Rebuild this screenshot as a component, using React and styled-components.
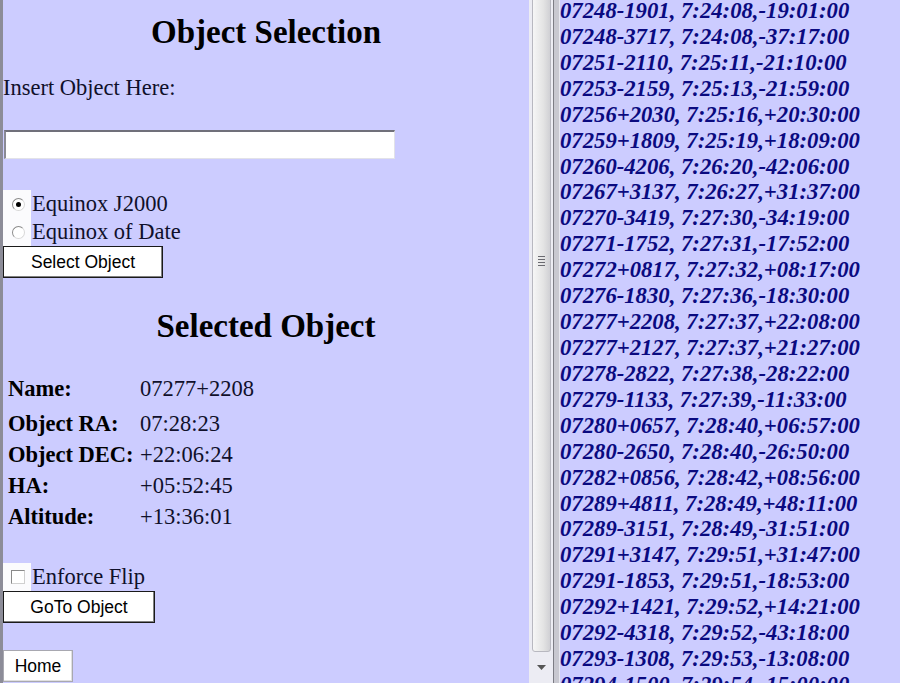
import React from 'react';
import styled, { createGlobalStyle } from 'styled-components';

const objects = [
  '07248-1901, 7:24:08,-19:01:00',
  '07248-3717, 7:24:08,-37:17:00',
  '07251-2110, 7:25:11,-21:10:00',
  '07253-2159, 7:25:13,-21:59:00',
  '07256+2030, 7:25:16,+20:30:00',
  '07259+1809, 7:25:19,+18:09:00',
  '07260-4206, 7:26:20,-42:06:00',
  '07267+3137, 7:26:27,+31:37:00',
  '07270-3419, 7:27:30,-34:19:00',
  '07271-1752, 7:27:31,-17:52:00',
  '07272+0817, 7:27:32,+08:17:00',
  '07276-1830, 7:27:36,-18:30:00',
  '07277+2208, 7:27:37,+22:08:00',
  '07277+2127, 7:27:37,+21:27:00',
  '07278-2822, 7:27:38,-28:22:00',
  '07279-1133, 7:27:39,-11:33:00',
  '07280+0657, 7:28:40,+06:57:00',
  '07280-2650, 7:28:40,-26:50:00',
  '07282+0856, 7:28:42,+08:56:00',
  '07289+4811, 7:28:49,+48:11:00',
  '07289-3151, 7:28:49,-31:51:00',
  '07291+3147, 7:29:51,+31:47:00',
  '07291-1853, 7:29:51,-18:53:00',
  '07292+1421, 7:29:52,+14:21:00',
  '07292-4318, 7:29:52,-43:18:00',
  '07293-1308, 7:29:53,-13:08:00',
  '07294-1500, 7:29:54,-15:00:00',
];

const details = [
  { label: 'Name:', value: '07277+2208', height: 39 },
  { label: 'Object RA:', value: '07:28:23', height: 31 },
  { label: 'Object DEC:', value: '+22:06:24', height: 31 },
  { label: 'HA:', value: '+05:52:45', height: 31 },
  { label: 'Altitude:', value: '+13:36:01', height: 31 },
];

const App = () => {
  return (
    <>
      <GlobalStyle />
      <Window>
        <LeftFrame>
          <Heading top={13}>Object Selection</Heading>
          <Label top={24}>Insert Object Here:</Label>
          <TextInput type="text" />
          <OptionGroup>
            <OptionRow>
              <MarkCell>
                <Radio checked />
              </MarkCell>
              Equinox J2000
            </OptionRow>
            <OptionRow>
              <MarkCell>
                <Radio />
              </MarkCell>
              Equinox of Date
            </OptionRow>
          </OptionGroup>
          <Button width={160}>Select Object</Button>

          <Heading top={29}>Selected Object</Heading>
          <DetailTable>
            {details.map((d) => (
              <DetailRow key={d.label} h={d.height}>
                <DetailLabel>{d.label}</DetailLabel>
                <DetailValue>{d.value}</DetailValue>
              </DetailRow>
            ))}
          </DetailTable>

          <CheckRow>
            <MarkCell>
              <Checkbox />
            </MarkCell>
            Enforce Flip
          </CheckRow>
          <Button width={152}>GoTo Object</Button>
          <Button width={70} plain top={27}>Home</Button>
        </LeftFrame>

        <Scrollbar>
          <Thumb>
            <Grip>
              <span />
              <span />
              <span />
              <span />
            </Grip>
          </Thumb>
          <ArrowButton>
            <svg width="9" height="5" viewBox="0 0 9 5">
              <path d="M0 0 H9 L4.5 5 Z" fill="#555" />
            </svg>
          </ArrowButton>
        </Scrollbar>
        <Divider />

        <RightFrame>
          {objects.map((o) => (
            <ObjectLine key={o}>{o}</ObjectLine>
          ))}
        </RightFrame>
      </Window>
    </>
  );
};

const GlobalStyle = createGlobalStyle`
  html, body {
    margin: 0;
    padding: 0;
    background: #ccccff;
  }
`;

const Window = styled.div`
  display: flex;
  width: 900px;
  height: 683px;
  overflow: hidden;
  background: #ccccff;
  font-family: "Liberation Serif", "Times New Roman", serif;
  color: #10102a;
`;

const LeftFrame = styled.div`
  width: 526px;
  flex-shrink: 0;
  border-left: 3px solid #8c8c98;
  display: flex;
  flex-direction: column;
  align-items: flex-start;
`;

const Heading = styled.h2`
  align-self: stretch;
  margin: ${(p) => p.top}px 0 0 0;
  font-size: 33px;
  line-height: 38px;
  font-weight: bold;
  text-align: center;
  color: #000;
`;

const Label = styled.div`
  margin-top: ${(p) => p.top}px;
  font-size: 22.5px;
  line-height: 26px;
`;

const TextInput = styled.input`
  margin: 29px 0 0 1px;
  width: 391px;
  height: 29px;
  box-sizing: border-box;
  background: #fff;
  border: 1px solid #e2e2e8;
  border-top: 2px solid #70707a;
  border-left: 2px solid #8a8a94;
  outline: none;
`;

const OptionGroup = styled.div`
  margin-top: 31px;
  display: flex;
  flex-direction: column;
`;

const OptionRow = styled.div`
  display: flex;
  align-items: center;
  height: 28px;
  font-size: 22.5px;
`;

const CheckRow = styled(OptionRow)`
  margin-top: 31px;
`;

const MarkCell = styled.div`
  width: 28px;
  height: 100%;
  background: #fbfbfd;
  display: flex;
  align-items: center;
  justify-content: center;
  margin-right: 1px;
`;

const Radio = styled.span`
  width: 11px;
  height: 11px;
  border-radius: 50%;
  border: 1px solid #8a8a8a;
  border-right-color: #d8d8d8;
  border-bottom-color: #d8d8d8;
  background: #fff;
  position: relative;
  margin-left: 2px;

  &::after {
    content: '';
    display: ${(p) => (p.checked ? 'block' : 'none')};
    position: absolute;
    left: 3px;
    top: 3px;
    width: 5px;
    height: 5px;
    border-radius: 50%;
    background: #000;
  }
`;

const Checkbox = styled.span`
  width: 12px;
  height: 12px;
  border: 1px solid #8a8a8a;
  border-right-color: #d0d0d0;
  border-bottom-color: #d0d0d0;
  background: #fff;
  margin-left: 2px;
`;

const Button = styled.button`
  margin: ${(p) => p.top || 0}px 0 0 0;
  width: ${(p) => p.width}px;
  height: 32px;
  box-sizing: border-box;
  background: #fff;
  font-family: "Liberation Sans", Arial, sans-serif;
  font-size: 17.5px;
  color: #000;
  padding: 0;
  border: 1px solid ${(p) => (p.plain ? '#a8a8b0' : '#1a1a1a')};
  box-shadow: ${(p) =>
    p.plain ? 'inset -1px -1px #e0e0e0' : 'inset -1px -1px #808080, inset 1px 1px #ffffff'};
`;

const DetailTable = styled.div`
  margin: 24px 0 0 5px;
  display: flex;
  flex-direction: column;
`;

const DetailRow = styled.div`
  display: flex;
  align-items: center;
  height: ${(p) => p.h}px;
  font-size: 22.5px;
`;

const DetailLabel = styled.div`
  width: 132px;
  font-weight: bold;
  color: #000;
`;

const DetailValue = styled.div``;

const Scrollbar = styled.div`
  width: 24px;
  flex-shrink: 0;
  background: #ececf3;
  display: flex;
  flex-direction: column;
  align-items: center;
`;

const Thumb = styled.div`
  width: 19px;
  height: 654px;
  box-sizing: border-box;
  margin-top: -2px;
  border: 1px solid #b8b8c0;
  border-radius: 0 0 3px 3px;
  background: linear-gradient(to right, #f6f6f6, #e4e4e4 60%, #d0d0d4);
  display: flex;
  align-items: flex-start;
  justify-content: center;
  padding-top: 257px;
`;

const Grip = styled.div`
  display: flex;
  flex-direction: column;
  gap: 2px;

  span {
    display: block;
    width: 7px;
    height: 1px;
    background: #6a6a70;
  }
`;

const ArrowButton = styled.div`
  flex: 1;
  display: flex;
  align-items: center;
  justify-content: center;
`;

const Divider = styled.div`
  width: 5px;
  flex-shrink: 0;
  background: #c8c8d0;
  border-left: 1px solid #7c7c84;
  border-right: 1px solid #e8e8f0;
`;

const RightFrame = styled.div`
  flex: 1;
  margin-top: -2px;
  white-space: nowrap;
`;

const ObjectLine = styled.div`
  font-size: 22.7px;
  line-height: 25.92px;
  font-weight: bold;
  font-style: italic;
  color: #0a0a80;
`;

export default App;
